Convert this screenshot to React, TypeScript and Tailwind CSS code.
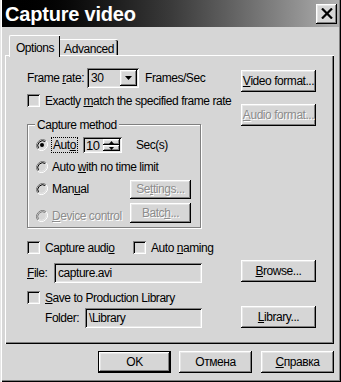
import React from 'react';

const raised =
  'shadow-[inset_-1px_-1px_#000,inset_1px_1px_#fff,inset_-2px_-2px_#808080,inset_2px_2px_#e6e6e6]';
const sunken =
  'shadow-[inset_1px_1px_#808080,inset_-1px_-1px_#fff,inset_2px_2px_#000,inset_-2px_-2px_#e6e6e6]';
const disabled = 'text-[#8c8c8c] [text-shadow:1px_1px_0_#fff]';

function Btn({ children, off, className = '' }: { children: React.ReactNode; off?: boolean; className?: string }) {
  return (
    <div className={`flex items-center justify-center bg-[#d6d6d6] ${raised} ${off ? disabled : ''} ${className}`}>
      {children}
    </div>
  );
}

function Check({ children, off }: { children: React.ReactNode; off?: boolean }) {
  return (
    <div className="flex items-center h-[13px]">
      <div className={`w-[13px] h-[13px] shrink-0 bg-[#d6d6d6] ${sunken}`} />
      <span className={`ml-[5px] ${off ? disabled : ''}`}>{children}</span>
    </div>
  );
}

function Radio({ checked, off, children, className = '' }: { checked?: boolean; off?: boolean; children: React.ReactNode; className?: string }) {
  return (
    <div className={`flex items-center ${className}`}>
      <svg width="12" height="12" viewBox="0 0 12 12" className="shrink-0">
        <path d="M10.2 1.8 A6 6 0 0 0 1.8 10.2" fill="none" stroke="#808080" strokeWidth="1" />
        <path d="M9.4 2.6 A4.9 4.9 0 0 0 2.6 9.4" fill="none" stroke={off ? '#808080' : '#000'} strokeWidth="1" />
        <path d="M1.8 10.2 A6 6 0 0 0 10.2 1.8" fill="none" stroke="#fff" strokeWidth="1" />
        <path d="M2.6 9.4 A4.9 4.9 0 0 0 9.4 2.6" fill="none" stroke="#e6e6e6" strokeWidth="1" />
        {checked && <circle cx="6" cy="6" r="2" fill="#000" />}
      </svg>
      <span className={`ml-[4px] ${off ? disabled : ''}`}>{children}</span>
    </div>
  );
}

function Field({ value, className = '' }: { value: string; className?: string }) {
  return (
    <div className={`h-[20px] flex items-center pl-[4px] bg-[#d6d6d6] ${sunken} ${className}`}>{value}</div>
  );
}

export default function App() {
  return (
    <div className="w-[341px] h-[382px] bg-[#d6d6d6] flex flex-col px-[2px] pb-[2px] text-[12px] tracking-[-0.45px] leading-none text-black font-['Liberation_Sans',Arial,sans-serif] shadow-[inset_1px_0_#e6e6e6,inset_2px_0_#fff,inset_-1px_-1px_#000,inset_-2px_-2px_#808080] select-none">
      {/* TITLE */}
      <div className="h-[27px] flex items-center bg-linear-to-r from-black via-[#3a3a3a] to-[#b0b0b0]">
        <span className="pl-[3px] text-[20px] font-bold text-white tracking-[-0.2px]">Capture video</span>
        <Btn className="ml-auto mr-[2px] w-[21px] h-[20px]">
          <svg width="12" height="11" viewBox="0 0 12 11">
            <path d="M1 0.5 L11 10.5 M11 0.5 L1 10.5" stroke="#000" strokeWidth="2.2" />
          </svg>
        </Btn>
      </div>

      <div className="flex-1 flex flex-col pl-[3px] pr-[5px]">
        {/* TABS */}
        <div className="mt-[8px] h-[20px] flex items-end pl-[4px]">
          <div className="relative z-10 -mb-[2px] h-[22px] w-[51px] flex items-start justify-center pt-[6px] bg-[#d6d6d6] border-t border-l border-white rounded-tl-[2px] shadow-[inset_-1px_0_#000]">
            Options
          </div>
          <div className="h-[16px] w-[58px] flex items-start justify-center pt-[3px] bg-[#d6d6d6] border-t border-white rounded-tr-[2px] shadow-[inset_-1px_0_#000,inset_-2px_0_#808080]">
            Advanced
          </div>
        </div>

        {/* PANEL */}
        <div className="h-[289px] flex pl-[22px] pr-[18px] shadow-[inset_1px_1px_#fff,inset_-1px_-1px_#000,inset_-2px_-2px_#808080]">
          <div className="flex-1 flex flex-col">
            <div className="mt-[13px] h-[20px] flex items-center">
              <span className="w-[60px]">Frame <u>r</u>ate:</span>
              <div className={`w-[52px] h-[20px] flex items-center pl-[4px] pr-[2px] bg-[#d6d6d6] ${sunken}`}>
                <span className="flex-1">30</span>
                <Btn className="w-[17px] h-[16px]">
                  <svg width="7" height="4" viewBox="0 0 7 4"><path d="M0 0H7L3.5 4Z" fill="#000" /></svg>
                </Btn>
              </div>
              <span className="ml-[6px]">Frames/Sec</span>
            </div>

            <div className="mt-[6px]">
              <Check>Exactly <u>m</u>atch the specified frame rate</Check>
            </div>

            {/* GROUP */}
            <div className="relative mt-[17px] w-[174px] h-[104px] border border-[#808080] shadow-[1px_1px_0_#fff,inset_1px_1px_0_#fff] flex flex-col pl-[8px] pr-[9px] pt-[12px]">
              <span className="absolute -top-[6px] left-[7px] px-[2px] bg-[#d6d6d6]">Capture method</span>
              <div className="h-[16px] flex items-center">
                <svg width="12" height="12" viewBox="0 0 12 12" className="shrink-0">
                  <path d="M10.2 1.8 A6 6 0 0 0 1.8 10.2" fill="none" stroke="#808080" />
                  <path d="M9.4 2.6 A4.9 4.9 0 0 0 2.6 9.4" fill="none" stroke="#000" />
                  <path d="M1.8 10.2 A6 6 0 0 0 10.2 1.8" fill="none" stroke="#fff" />
                  <path d="M2.6 9.4 A4.9 4.9 0 0 0 9.4 2.6" fill="none" stroke="#e6e6e6" />
                  <circle cx="6" cy="6" r="2" fill="#000" />
                </svg>
                <span className="ml-[3px] px-[1px] py-[1px] border border-dotted border-black">Aut<u>o</u></span>
                <div className={`ml-[5px] w-[39px] h-[16px] flex items-center pl-[3px] pr-[2px] ${sunken}`}>
                  <span className="flex-1 text-[13px]">10</span>
                  <div className="flex flex-col">
                    <Btn className="w-[17px] h-[6px]">
                      <svg width="5" height="3" viewBox="0 0 5 3"><path d="M0 3H5L2.5 0Z" fill="#000" /></svg>
                    </Btn>
                    <Btn className="w-[17px] h-[6px]">
                      <svg width="5" height="3" viewBox="0 0 5 3"><path d="M0 0H5L2.5 3Z" fill="#000" /></svg>
                    </Btn>
                  </div>
                </div>
                <span className="ml-[14px]">Sec(s)</span>
              </div>
              <Radio className="mt-[6px] h-[16px]">Auto <u>w</u>ith no time limit</Radio>
              <div className="mt-[4px] h-[20px] flex items-center">
                <Radio>Man<u>u</u>al</Radio>
                <Btn off className="ml-auto w-[61px] h-[19px]">Se<u>t</u>tings...</Btn>
              </div>
              <div className="mt-[4px] h-[20px] flex items-center">
                <Radio off className="mt-[6px]"><u>D</u>evice control</Radio>
                <Btn off className="ml-auto w-[61px] h-[20px]">Batc<u>h</u>...</Btn>
              </div>
            </div>

            <div className="mt-[13px] flex">
              <div className="w-[106px]">
                <Check>Capture audi<u>o</u></Check>
              </div>
              <Check>Auto <u>n</u>aming</Check>
            </div>

            <div className="mt-[9px] flex items-center">
              <span className="w-[27px]"><u>F</u>ile:</span>
              <Field value="capture.avi" className="w-[148px]" />
            </div>

            <div className="mt-[8px]">
              <Check><u>S</u>ave to Production Library</Check>
            </div>

            <div className="mt-[4px] flex items-center pl-[18px]">
              <span className="w-[40px]">Folder:</span>
              <Field value="\Library" className="w-[117px]" />
            </div>
          </div>

          <div className="w-[75px] flex flex-col">
            <Btn className="mt-[15px] h-[22px]"><u>V</u>ideo format...</Btn>
            <Btn off className="mt-[12px] h-[22px]"><u>A</u>udio format...</Btn>
            <Btn className="mt-[134px] h-[22px]"><u>B</u>rowse...</Btn>
            <Btn className="mt-[24px] h-[22px]"><u>L</u>ibrary...</Btn>
          </div>
        </div>

        {/* BUTTONS */}
        <div className="mt-[7px] flex justify-end">
          <div className="w-[73px] h-[22px] border border-black flex">
            <Btn className="flex-1">OK</Btn>
          </div>
          <Btn className="ml-[8px] w-[73px] h-[22px]">Отмена</Btn>
          <Btn className="ml-[9px] w-[73px] h-[22px]"><u>С</u>правка</Btn>
        </div>
      </div>
    </div>
  );
}
